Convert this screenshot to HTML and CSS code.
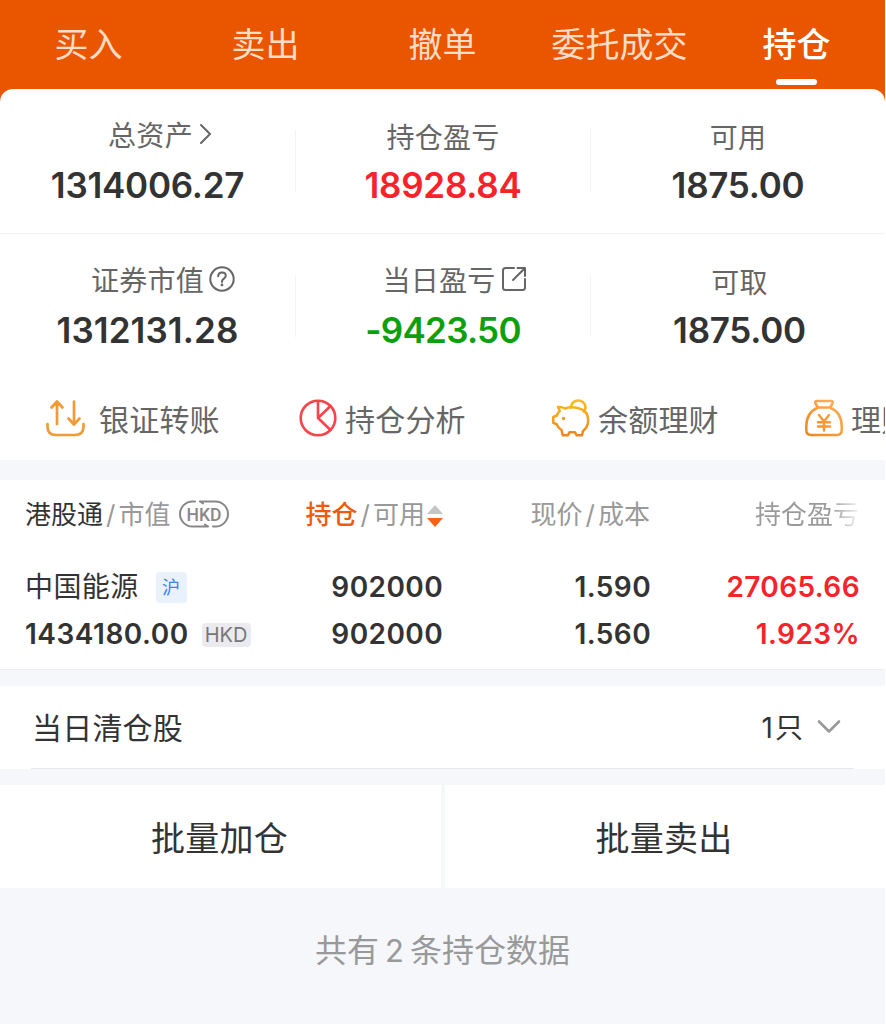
FILE: index.html
```html
<!DOCTYPE html>
<html lang="zh-CN">
<head>
  <meta charset="UTF-8" />
  <meta name="viewport" content="width=device-width, initial-scale=1.0"/>
  <title>持仓</title>
  <link rel="stylesheet" href="styles.css">
</head>
<body>
  <div class="app">
    <nav class="tabs">
      <a class="tab">买入</a>
      <a class="tab">卖出</a>
      <a class="tab">撤单</a>
      <a class="tab">委托成交</a>
      <a class="tab active">持仓</a>
    </nav>

    <section class="account">
      <div class="summary">
        <div class="cell">
          <div class="label with-icon">总资产
            <svg class="arrow" width="14" height="22" viewBox="0 0 14 22"><path d="M2 2l9 9-9 9"/></svg>
          </div>
          <div class="value">1314006.27</div>
        </div>
        <div class="cell">
          <div class="label">持仓盈亏</div>
          <div class="value red">18928.84</div>
        </div>
        <div class="cell">
          <div class="label">可用</div>
          <div class="value">1875.00</div>
        </div>
      </div>
      <div class="summary second">
        <div class="cell">
          <div class="label with-icon help">证券市值
            <svg width="26" height="26" viewBox="0 0 26 26"><circle cx="13" cy="13" r="11.7"/><path d="M9.2 10.2c0-2.3 1.6-3.8 3.8-3.8s3.8 1.4 3.8 3.4c0 2.7-3.8 3-3.8 5.7v.6"/><circle class="dot" cx="13" cy="19" r="1.4"/></svg>
          </div>
          <div class="value wide">1312131.28</div>
        </div>
        <div class="cell">
          <div class="label with-icon share">当日盈亏
            <svg width="26" height="26" viewBox="0 0 26 26"><path d="M13 2H4.500Q2 2 2 4.500v17Q2 24 4.500 24h17q2.500 0 2.500-2.500V13M16.500 2H24v8M24 2L12 14"/></svg>
          </div>
          <div class="value green">-9423.50</div>
        </div>
        <div class="cell last">
          <div class="label">可取</div>
          <div class="value">1875.00</div>
        </div>
      </div>

      <div class="shortcuts">
        <a class="shortcut transfer">
          <svg width="40" height="40" viewBox="0 0 40 40" stroke="#f09b35" stroke-width="2.7"><path d="M12 26V4M6.500 9.500L12 3.500l5.500 6M29 3.500V26M23.500 20.500l5.500 6 5.500-6M2.500 26v2.500q0 8.500 8.500 8.500h19q8.500 0 8.500-8.500V26"/></svg>
          银证转账
        </a>
        <a class="shortcut">
          <svg width="40" height="40" viewBox="0 0 40 40" stroke="#f9444b" stroke-width="2.6"><circle cx="20" cy="20" r="17.300"/><path d="M20 3v17L32.500 8M20 20l12.500 12"/></svg>
          持仓分析
        </a>
        <a class="shortcut">
          <svg width="40" height="40" viewBox="0 0 40 40" stroke="url(#gold)" stroke-width="2.500">
            <defs>
              <linearGradient id="gold" gradientUnits="userSpaceOnUse" x1="0" y1="2" x2="0" y2="38"><stop offset="0" stop-color="#fcbc1a"/><stop offset="1" stop-color="#ee8420"/></linearGradient>
            </defs>
            <path d="M7 9q4-.5 7 1.500c4-1.500 9-1.500 13-.5 6.500 1.700 10.200 6 10.200 12 0 5-2 8.500-5.200 11l-1 4.200h-5.500L24 34.300h-5.500L17 37.200h-5.200L10.500 32c-2.500-1.500-4-3.500-5-6L2.300 25v-6l3.500-1.500c.7-2 1.700-3.300 3-4.500z"/>
            <path d="M20 9.500C20 5.500 23 2.500 27.200 2.500S34.500 5.500 34.500 9.500c0 1.700-.6 3-1.500 4"/>
            <circle class="eye" cx="12.500" cy="20.500" r="1.700"/>
          </svg>
          余额理财
        </a>
        <a class="shortcut">
          <svg width="40" height="40" viewBox="0 0 40 40" stroke="url(#bag)" stroke-width="2.500">
            <defs>
              <linearGradient id="bag" gradientUnits="userSpaceOnUse" x1="38" y1="2" x2="4" y2="38"><stop offset="0" stop-color="#f9b465"/><stop offset="1" stop-color="#f58518"/></linearGradient>
            </defs>
            <path d="M14 9.500l-2.500-4q-1-2.500 1.500-2.500h14q2.500 0 1.500 2.500l-2.500 4zM14 9.500C6 13 2.300 20 2.300 28v4q0 5 5 5h25.400q5 0 5-5v-4C37.700 20 34 13 26 9.500"/>
            <path d="M15 17l5 6.500 5-6.500M14 24.300h12M14 28.600h12M20 24v8.500"/>
          </svg>
          理财
        </a>
      </div>
    </section>

    <section class="holdings">
      <div class="row head">
        <div class="col-name"><b>港股通</b><i>/</i>市值
          <svg class="hkd" width="50" height="28" viewBox="0 0 50 28"><path d="M16 1.500h-2.500a12.400 12.400 0 0 0 0 25H29M34 26.500h2.500a12.400 12.400 0 0 0 0-25H21M21 1.500l3 2M29 26.500l-3-2"/><text x="7.500" y="20.500" textLength="35" lengthAdjust="spacingAndGlyphs">HKD</text></svg>
        </div>
        <div class="col"><span class="sorted">持仓</span><i>/</i>可用<svg class="sort" width="16" height="22" viewBox="0 0 16 22"><path fill="#c5c5c5" d="M8 0l8 9H0z"/><path fill="#fb6214" d="M0 13h16l-8 9z"/></svg></div>
        <div class="col">现价<i>/</i>成本</div>
        <div class="col"><span class="fade">持仓盈亏</span></div>
      </div>
      <div class="row">
        <div class="col-name stock">中国能源<span class="market">沪</span></div>
        <div class="col">902000</div>
        <div class="col">1.590</div>
        <div class="col red">27065.66</div>
      </div>
      <div class="row">
        <div class="col-name amount">1434180.00<span class="currency">HKD</span></div>
        <div class="col">902000</div>
        <div class="col">1.560</div>
        <div class="col red">1.923%</div>
      </div>
    </section>

    <section class="cleared">
      <div class="cleared-inner">
        <span>当日清仓股</span>
        <span class="count">1只
          <svg width="24" height="16" viewBox="0 0 24 16"><path d="M2 2.500l10 10 10-10"/></svg>
        </span>
      </div>
    </section>

    <div class="actions">
      <button>批量加仓</button>
      <button>批量卖出</button>
    </div>

    <p class="total">共有<span>2</span>条持仓数据</p>
  </div>
</body>
</html>
```
FILE: styles.css
```css
* {
  box-sizing: border-box;
}

body {
  margin: 0;
  background: #ffffff;
  font-family: Inter, 'Noto Sans CJK SC', sans-serif;
  color: #333333;
}

svg {
  fill: none;
  stroke-linecap: round;
  stroke-linejoin: round;
  flex-shrink: 0;
}

.app {
  width: 885px;
  height: 1024px;
  overflow: hidden;
  background: #f6f7fa;
}

/* top tabs */
.tabs {
  display: flex;
  height: 105px;
  background: #ea5500;
}

.tab {
  flex: 1;
  display: flex;
  flex-direction: column;
  align-items: center;
  padding-top: 20px;
  font-size: 34px;
  line-height: 50px;
  letter-spacing: 0.1px;
  color: #ffdcc6;
}

.tab.active {
  color: #ffffff;
  font-weight: 500;
}

.tab.active::after {
  content: '';
  width: 41px;
  height: 6px;
  margin-top: 9px;
  border-radius: 3px;
  background: #ffffff;
}

/* account summary */
.account {
  height: 371px;
  margin-top: -16px;
  border-radius: 13px 13px 0 0;
  background: #ffffff;
}

.summary {
  display: grid;
  grid-template-columns: 296px 295px 294px;
  height: 145px;
  padding-top: 41px;
  border-bottom: 1px solid #f2f2f2;
}

.summary.second {
  height: 144px;
  border-bottom: none;
}

.cell {
  height: 62px;
  border-right: 1px solid #f3f3f3;
  text-align: center;
}

.cell:last-child {
  border-right: none;
}

.cell.last {
  padding-left: 3px;
}

.label {
  display: flex;
  align-items: center;
  justify-content: center;
  height: 40px;
  margin-top: -14px;
  margin-bottom: 1px;
  font-size: 28px;
  letter-spacing: 0.3px;
  color: #666666;
}

.label svg {
  stroke: #666666;
  stroke-width: 2;
}

.label .dot {
  fill: #666666;
  stroke: none;
}

.label.with-icon {
  margin-top: -16px;
  margin-bottom: 3px;
  padding-left: 26px;
  gap: 5px;
}

.label.help {
  padding-left: 31px;
}

.label.share {
  padding-left: 23px;
}

.label .arrow {
  margin-left: 1px;
}

.value {
  height: 56px;
  line-height: 57px;
  font-size: 35px;
  font-weight: 600;
  letter-spacing: -0.25px;
  white-space: nowrap;
}

.value.wide {
  letter-spacing: 0.1px;
}

.red {
  color: #f6232a;
}

.value.green {
  color: #0da00d;
  letter-spacing: -0.7px;
}

.shortcuts {
  display: flex;
  height: 82px;
  padding-left: 45px;
  padding-bottom: 2px;
  overflow: hidden;
}

.shortcut {
  display: flex;
  align-items: center;
  flex: 0 0 253px;
  gap: 7px;
  font-size: 30px;
  letter-spacing: 0.2px;
  white-space: nowrap;
  color: #666666;
}

.shortcut.transfer {
  gap: 14px;
}

.shortcut .eye {
  fill: #f39a1c;
  stroke: none;
}

/* holdings table */
.holdings {
  height: 190px;
  margin-top: 20px;
  padding: 9px 25px 0;
  border-bottom: 1px solid #ededef;
  background: #ffffff;
}

.row {
  display: grid;
  grid-template-columns: 237px 181px 208px 209px;
  height: 47px;
  line-height: 47px;
  font-size: 28px;
  font-weight: 600;
  letter-spacing: 0.4px;
  white-space: nowrap;
}

.row.head {
  height: 75px;
  line-height: 51px;
  font-size: 26px;
  font-weight: 400;
  letter-spacing: 0;
  color: #999999;
}

.head b {
  font-weight: 400;
  color: #333333;
}

.head i {
  margin: 0 3px;
  font-style: normal;
}

.col {
  text-align: right;
}

.head .col:nth-child(n + 3) {
  padding-right: 1px;
}

.col-name {
  display: flex;
  align-items: center;
}

.head .col-name {
  height: 50px;
}

.hkd {
  margin-left: 9px;
  stroke: #888888;
  stroke-width: 2;
}

.hkd text {
  fill: #888888;
  stroke: none;
  font-family: Roboto, sans-serif;
  font-size: 19px;
  font-weight: 500;
}

.sorted {
  color: #ef5a10;
  font-weight: 500;
}

.sort {
  margin-left: 2px;
  vertical-align: -3px;
}

.fade {
  background: linear-gradient(to right, #999999 72%, #f2f2f2);
  background-clip: text;
  -webkit-background-clip: text;
  color: transparent;
}

.stock {
  font-weight: 400;
}

.amount {
  letter-spacing: 0.5px;
}

.market {
  width: 31px;
  height: 31px;
  margin-left: 17px;
  border-radius: 4px;
  background: #e9f1fc;
  color: #3b83e4;
  font-size: 18px;
  line-height: 31px;
  text-align: center;
}

.currency {
  width: 49px;
  height: 24px;
  margin-left: 13px;
  border-radius: 4px;
  background: #ebebef;
  color: #777777;
  font-size: 20px;
  font-weight: 400;
  line-height: 24px;
  letter-spacing: 0;
  text-align: center;
}

/* cleared today */
.cleared {
  height: 83px;
  margin-top: 16px;
  padding: 0 31px;
  background: #ffffff;
}

.cleared-inner {
  display: flex;
  align-items: center;
  justify-content: space-between;
  height: 83px;
  padding: 0 13px 2px 1px;
  border-bottom: 1px solid #e6e7e9;
  font-size: 30px;
  letter-spacing: 0.2px;
}

.count {
  display: flex;
  align-items: center;
  gap: 12px;
  margin-top: -1px;
  font-size: 28px;
  letter-spacing: 2px;
}

.count svg {
  margin-top: 3px;
  stroke: #999999;
  stroke-width: 2.6;
}

.actions {
  display: grid;
  grid-template-columns: 441px 440px;
  gap: 4px;
  height: 103px;
  margin-top: 16px;
}

.actions button {
  border: none;
  padding: 0 2px 0 0;
  background: #ffffff;
  color: #333333;
  font-family: inherit;
  font-size: 34px;
  letter-spacing: 0.3px;
  cursor: pointer;
}

.total {
  margin: 38px 0 0;
  font-size: 32px;
  line-height: 50px;
  text-align: center;
  color: #999999;
}

.total span {
  margin: 0 6px;
  font-size: 31px;
}
```
